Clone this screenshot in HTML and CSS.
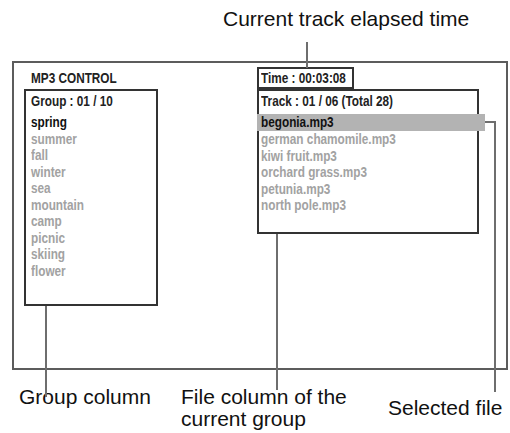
FILE: index.html
```html
<!DOCTYPE html>
<html lang="en">
    <head>
        <meta charset="utf-8" />
        <meta name="viewport" content="width=device-width, initial-scale=1" />
        <title>MP3 Control</title>
        <link rel="stylesheet" href="styles.css">
    </head>
    <body>
        <div class="caption caption-top">Current track elapsed time</div>

        <div class="screen">
            <div class="screen-title"><span class="nar">MP3 CONTROL</span></div>
            <div class="time-box"><span class="nar">Time : 00:03:08</span></div>

            <div class="list-box group-box">
                <div class="list-head"><span class="nar">Group : 01 / 10</span></div>
                <div class="item current"><span class="nar">spring</span></div>
                <div class="item"><span class="nar">summer</span></div>
                <div class="item"><span class="nar">fall</span></div>
                <div class="item"><span class="nar">winter</span></div>
                <div class="item"><span class="nar">sea</span></div>
                <div class="item"><span class="nar">mountain</span></div>
                <div class="item"><span class="nar">camp</span></div>
                <div class="item"><span class="nar">picnic</span></div>
                <div class="item"><span class="nar">skiing</span></div>
                <div class="item"><span class="nar">flower</span></div>
            </div>

            <div class="list-box track-box">
                <div class="list-head"><span class="nar">Track : 01 / 06 (Total 28)</span></div>
                <div class="item selected"><span class="nar">begonia.mp3</span></div>
                <div class="item"><span class="nar">german chamomile.mp3</span></div>
                <div class="item"><span class="nar">kiwi fruit.mp3</span></div>
                <div class="item"><span class="nar">orchard grass.mp3</span></div>
                <div class="item"><span class="nar">petunia.mp3</span></div>
                <div class="item"><span class="nar">north pole.mp3</span></div>
            </div>
        </div>

        <div class="captions-bottom">
            <div class="caption caption-group">Group column</div>
            <div class="caption caption-file">File column of the<br>current group</div>
            <div class="caption caption-selected">Selected file</div>
        </div>

        <!-- leader lines from the captions to the screen parts -->
        <svg class="leaders" width="510" height="433" viewBox="0 0 510 433">
            <line x1="307" y1="42" x2="307" y2="68" />
            <line x1="46" y1="306" x2="46" y2="397" />
            <line x1="277" y1="234" x2="277" y2="390" />
            <polyline points="485,122 495,122 495,392" />
        </svg>
    </body>
</html>
```

FILE: styles.css
```css
body, html {
    margin: 0;
    padding: 0;
    background: white;
}

body {
    position: relative;
    width: 510px;
    height: 433px;
    overflow: hidden;
    font-family: "Liberation Sans", Arial, sans-serif;
    color: #1a1a1a;
}

.caption {
    font-size: 21px;
    line-height: 22px;
    color: #111;
}

.caption-top {
    padding: 8px 0 0 223px;
}

.screen {
    box-sizing: border-box;
    margin: 31px 0 0 12px;
    width: 496px;
    height: 309px;
    border: 2px solid #5c5c5c;
    padding: 4px 0 0 10px;
    display: grid;
    grid-template-columns: 134px 222px;
    grid-template-rows: 22px auto;
    column-gap: 99px;
    align-items: start;
    font-weight: bold;
    font-size: 15.5px;
}

/* condensed look: no narrow face installed, so squeeze the bold sans */
.nar {
    display: inline-block;
    transform: scaleX(0.76);
    transform-origin: left center;
    white-space: nowrap;
}

.screen-title {
    padding: 3px 0 0 7px;
    line-height: 16px;
    color: #222;
}

.time-box {
    box-sizing: border-box;
    width: 97px;
    height: 22px;
    border: 2px solid #333;
    padding: 1px 0 0 2px;
    line-height: 16px;
    color: #222;
    white-space: nowrap;
}

.list-box {
    box-sizing: border-box;
    border: 2px solid #333;
    padding-top: 2px;
}

.group-box {
    height: 217px;
    padding-left: 5px;
}

.track-box {
    height: 145px;
    padding-left: 2px;
}

.list-head {
    line-height: 16.5px;
    margin-bottom: 4.5px;
    color: #222;
    white-space: nowrap;
}

.item {
    line-height: 16.5px;
    color: #a2a2a2;
    white-space: nowrap;
}

.item.current {
    color: #111;
}

.item.selected {
    color: #111;
    background: #b3b3b3;
    height: 17px;
    margin: 0 -8px 0 -4px;
    padding-left: 4px;
}

.captions-bottom {
    display: flex;
    align-items: flex-start;
    padding-top: 16px;
}

.caption-group {
    margin-left: 19px;
    width: 162px;
}

.caption-file {
    width: 207px;
}

.caption-selected {
    margin-top: 11px;
}

.leaders {
    position: absolute;
    top: 0;
    left: 0;
    pointer-events: none;
}

.leaders line,
.leaders polyline {
    fill: none;
    stroke: #6e6e6e;
    stroke-width: 2;
}
```
